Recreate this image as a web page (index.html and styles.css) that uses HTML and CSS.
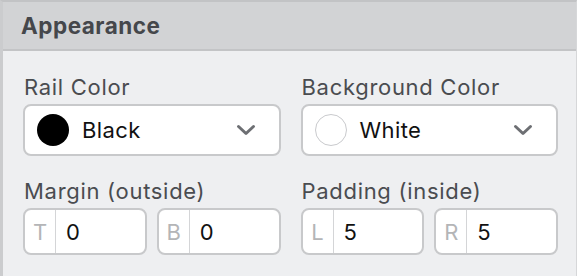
FILE: index.html
```html
<!DOCTYPE html>
<html lang="en">
<head>
<meta charset="utf-8">
<title>Appearance</title>
<link rel="stylesheet" href="styles.css">
</head>
<body>
<section class="panel">
  <header class="panel-header">Appearance</header>
  <div class="panel-body">
    <div class="field">
      <div class="label">Rail Color</div>
      <div class="select">
        <span class="swatch swatch-black"></span>
        <span class="select-value">Black</span>
        <svg class="chevron" width="20" height="12" viewBox="0 0 20 12"><path d="M2.5 2.5 L10 9.5 L17.5 2.5" fill="none" stroke="#6d6f73" stroke-width="3" stroke-linecap="round" stroke-linejoin="round"/></svg>
      </div>
    </div>
    <div class="field">
      <div class="label">Background Color</div>
      <div class="select">
        <span class="swatch swatch-white"></span>
        <span class="select-value">White</span>
        <svg class="chevron" width="20" height="12" viewBox="0 0 20 12"><path d="M2.5 2.5 L10 9.5 L17.5 2.5" fill="none" stroke="#6d6f73" stroke-width="3" stroke-linecap="round" stroke-linejoin="round"/></svg>
      </div>
    </div>
    <div class="field">
      <div class="label">Margin (outside)</div>
      <div class="pair">
        <div class="num"><span class="prefix">T</span><span class="num-value">0</span></div>
        <div class="num"><span class="prefix">B</span><span class="num-value">0</span></div>
      </div>
    </div>
    <div class="field">
      <div class="label">Padding (inside)</div>
      <div class="pair">
        <div class="num"><span class="prefix">L</span><span class="num-value">5</span></div>
        <div class="num"><span class="prefix">R</span><span class="num-value">5</span></div>
      </div>
    </div>
  </div>
</section>
</body>
</html>
```
FILE: styles.css
```css
html, body {
  margin: 0;
  padding: 0;
  background: #eeeff1;
}
body {
  font-family: Inter, "Liberation Sans", sans-serif;
  width: 577px;
  height: 276px;
  overflow: hidden;
}
.panel {
  box-sizing: border-box;
  width: 577px;
  height: 276px;
  border-top: 2px solid #c2c3c5;
  border-left: 3px solid #cbccce;
  border-right: 1px solid #d6d7d9;
  background: #eeeff1;
}
.panel-header {
  box-sizing: border-box;
  height: 49px;
  background: #d2d3d5;
  border-bottom: 2px solid #c3c4c6;
  padding: 10px 0 0 18px;
  font-size: 22.5px;
  font-weight: 700;
  line-height: 28px;
  color: #45474b;
  letter-spacing: 0.5px;
}
.panel-body {
  display: grid;
  grid-template-columns: 1fr 1fr;
  column-gap: 20px;
  row-gap: 22px;
  padding: 23px 18px 0 20px;
}
.field {
  display: flex;
  flex-direction: column;
  gap: 4px;
}
.label {
  font-size: 22px;
  line-height: 26px;
  color: #4a4c50;
  letter-spacing: 0.7px;
  padding-left: 1px;
}
.select {
  box-sizing: border-box;
  height: 52px;
  display: flex;
  align-items: center;
  background: #ffffff;
  border: 2px solid #c8c9cb;
  border-radius: 8px;
  padding: 0 23px 0 12px;
}
.swatch {
  box-sizing: border-box;
  width: 32px;
  height: 32px;
  border-radius: 50%;
  flex: none;
}
.swatch-black {
  background: #000000;
}
.swatch-white {
  background: #ffffff;
  border: 1.5px solid #c9cacd;
}
.select-value {
  flex: 1;
  margin-left: 13px;
  font-size: 22px;
  color: #111111;
  letter-spacing: 0.4px;
}
.chevron {
  flex: none;
}
.pair {
  display: grid;
  grid-template-columns: 1fr 1fr;
  column-gap: 10px;
}
.num {
  box-sizing: border-box;
  height: 47px;
  display: flex;
  align-items: stretch;
  background: #ffffff;
  border: 2px solid #c8c9cb;
  border-radius: 8px;
  font-size: 22px;
}
.prefix {
  width: 30px;
  flex: none;
  display: flex;
  align-items: center;
  justify-content: center;
  border-right: 1.5px solid #d4d5d7;
  color: #b4b5b7;
}
.num-value {
  display: flex;
  align-items: center;
  padding-left: 10px;
  color: #111111;
}
```
